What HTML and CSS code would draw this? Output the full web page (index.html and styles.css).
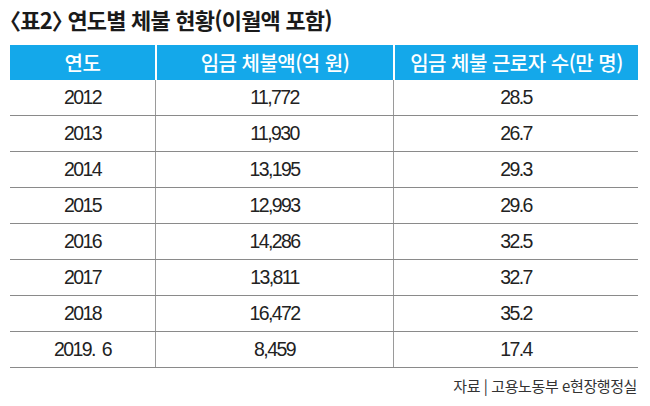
FILE: index.html
```html
<!DOCTYPE html>
<html lang="ko">
<head>
<meta charset="utf-8">
<title>연도별 체불 현황</title>
<link rel="stylesheet" href="styles.css">
</head>
<body>
<div class="page">
  <h1 class="title">〈표2〉 연도별 체불 현황(이월액 포함)</h1>
  <div class="table">
    <div class="row head">
      <div class="cell">연도</div>
      <div class="cell">임금 체불액(억 원)</div>
      <div class="cell">임금 체불 근로자 수(만 명)</div>
    </div>
    <div class="row"><div class="cell">2012</div><div class="cell">11,772</div><div class="cell">28.5</div></div>
    <div class="row"><div class="cell">2013</div><div class="cell">11,930</div><div class="cell">26.7</div></div>
    <div class="row"><div class="cell">2014</div><div class="cell">13,195</div><div class="cell">29.3</div></div>
    <div class="row"><div class="cell">2015</div><div class="cell">12,993</div><div class="cell">29.6</div></div>
    <div class="row"><div class="cell">2016</div><div class="cell">14,286</div><div class="cell">32.5</div></div>
    <div class="row"><div class="cell">2017</div><div class="cell">13,811</div><div class="cell">32.7</div></div>
    <div class="row"><div class="cell">2018</div><div class="cell">16,472</div><div class="cell">35.2</div></div>
    <div class="row"><div class="cell">2019. 6</div><div class="cell">8,459</div><div class="cell">17.4</div></div>
  </div>
  <p class="source">자료 | 고용노동부 e현장행정실</p>
</div>
</body>
</html>
```

FILE: styles.css
```css
html, body {
  margin: 0;
  padding: 0;
  background: #ffffff;
}

.page {
  width: 628px;
  padding: 6px 12px 0 10px;
  font-family: "Noto Sans CJK KR", "Noto Sans", sans-serif;
  color: #222222;
}

.title {
  margin: 0 0 13px 0;
  font-size: 22px;
  line-height: 26px;
  height: 26px;
  font-weight: 700;
  letter-spacing: -0.8px;
  font-feature-settings: "halt" 1;
  color: #1a1a1a;
  white-space: nowrap;
}

.table {
  display: flex;
  flex-direction: column;
}

.row {
  display: grid;
  grid-template-columns: 145px 238px 245px;
  height: 36px;
  box-sizing: border-box;
  border-bottom: 1px solid #8a8a8a;
}

.cell {
  display: flex;
  align-items: center;
  justify-content: center;
  font-family: "Liberation Sans", "Noto Sans CJK KR", sans-serif;
  font-size: 19.5px;
  letter-spacing: -1.6px;
  word-spacing: 3px;
  color: #222222;
}

.cell + .cell {
  border-left: 1px solid #9a9a9a;
}

.row.head {
  height: 35px;
  background: #14a8ea;
  border-bottom: none;
}

.row.head .cell {
  font-family: "Noto Sans CJK KR", sans-serif;
  font-weight: 500;
  font-size: 20px;
  letter-spacing: -0.5px;
  word-spacing: 0;
  color: #ffffff;
}

.row.head .cell + .cell {
  border-left: 2px solid #ffffff;
}

.source {
  margin: 8px 0 0 0;
  text-align: right;
  font-size: 15px;
  line-height: 20px;
  letter-spacing: -0.4px;
  color: #333333;
  padding-right: 1px;
}
```
